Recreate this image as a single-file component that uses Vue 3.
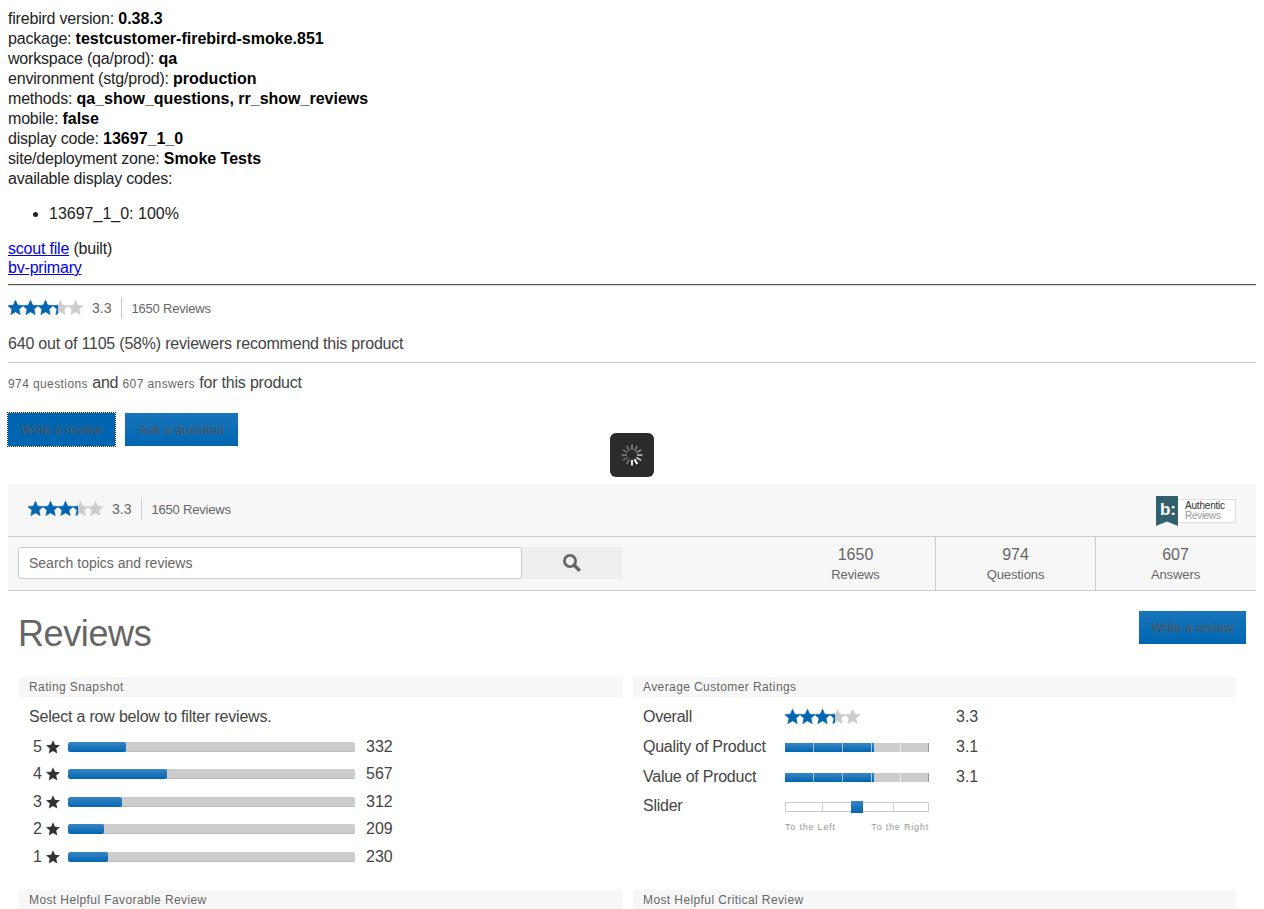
<template>
  <div class="page">
    <div class="debug">
      <div v-for="row in debugRows" :key="row[0]">{{ row[0] }}: <b>{{ row[1] }}</b></div>
      <div>available display codes:</div>
    </div>
    <ul class="codes"><li>13697_1_0: 100%</li></ul>
    <div class="links">
      <div><a href="#">scout file</a> (built)</div>
      <div><a href="#">bv-primary</a></div>
    </div>
    <hr class="rule" />

    <div class="summary first">
      <Stars />
      <span class="avg">3.3</span>
      <span class="count">1650 Reviews</span>
    </div>
    <div class="recommend">640 out of 1105 (58%) reviewers recommend this product</div>
    <div class="qa">
      <span class="small">974 questions</span> and <span class="small">607 answers</span> for this product
    </div>
    <div class="actions">
      <button class="btn focused">Write a review</button>
      <button class="btn wide">Ask a question</button>
    </div>

    <div class="spinner">
      <svg width="26" height="26" viewBox="0 0 26 26">
        <line v-for="t in ticks" :key="t.angle" x1="13" y1="2.5" x2="13" y2="8" stroke="#fff" stroke-width="2"
          :stroke-opacity="t.opacity" :transform="`rotate(${t.angle} 13 13)`" />
      </svg>
    </div>

    <section class="panel">
      <div class="panel-top">
        <div class="summary">
          <Stars />
          <span class="avg">3.3</span>
          <span class="count">1650 Reviews</span>
        </div>
        <div class="badge">
          <svg class="ribbon" width="22" height="30" viewBox="0 0 22 30"><path d="M0 0H22V30L11 25.5L0 30Z" fill="#33606f" /></svg>
          <span class="ribbon-b">b:</span>
          <div class="badge-text"><span>Authentic</span><span class="grey">Reviews</span></div>
        </div>
      </div>
      <div class="panel-bottom">
        <div class="search">
          <div class="search-input">Search topics and reviews</div>
          <div class="search-btn">
            <svg width="20" height="20" viewBox="0 0 20 20" fill="none" stroke="#666">
              <circle cx="8" cy="8" r="5.6" stroke-width="2.8" />
              <path d="M12.2 12.2L17.8 17.8" stroke-width="3.4" />
            </svg>
          </div>
        </div>
        <div class="tabs">
          <div v-for="tab in tabs" :key="tab[1]" class="tab">
            <div class="tab-num">{{ tab[0] }}</div>
            <div class="tab-label">{{ tab[1] }}</div>
          </div>
        </div>
      </div>
    </section>

    <div class="reviews-head">
      <h1>Reviews</h1>
      <button class="btn">Write a review</button>
    </div>

    <div class="cols">
      <div class="col">
        <h3 class="bar-title">Rating Snapshot</h3>
        <div class="hint">Select a row below to filter reviews.</div>
        <div class="hist">
          <div v-for="r in histogram" :key="r.star" class="hist-row">
            <span class="hist-star">{{ r.star }}</span>
            <svg class="mini-star" width="14" height="14" viewBox="0 0 24 24"><path :d="starPath" fill="#333" /></svg>
            <div class="hist-track"><div class="hist-fill" :style="{ width: (r.n / 1650 * 100) + '%' }"></div></div>
            <span class="hist-n">{{ r.n }}</span>
          </div>
        </div>
      </div>
      <div class="col">
        <h3 class="bar-title">Average Customer Ratings</h3>
        <div class="avg-list">
          <div class="avg-row">
            <span class="avg-label">Overall</span>
            <div class="avg-cell"><Stars /></div>
            <span class="avg-val">3.3</span>
          </div>
          <div v-for="a in secondary" :key="a" class="avg-row">
            <span class="avg-label">{{ a }}</span>
            <div class="avg-cell">
              <div class="seg-track">
                <div class="seg-fill"></div>
                <i v-for="n in 4" :key="n" class="seg-gap"></i>
              </div>
            </div>
            <span class="avg-val">3.1</span>
          </div>
          <div class="avg-row slider-row">
            <span class="avg-label">Slider</span>
            <div class="avg-cell">
              <div class="slider">
                <i class="slider-tick one"></i>
                <i class="slider-tick two"></i>
                <i class="slider-thumb"></i>
              </div>
              <div class="slider-labels"><span>To the Left</span><span>To the Right</span></div>
            </div>
          </div>
        </div>
      </div>
    </div>

    <div class="cols bottom">
      <div class="col"><h3 class="bar-title">Most Helpful Favorable Review</h3></div>
      <div class="col"><h3 class="bar-title">Most Helpful Critical Review</h3></div>
    </div>
  </div>
</template>

<script setup>
import { h } from 'vue'

const starPath = 'M12 .5L15.4 8.2 24 9 17.5 14.7 19.4 23.3 12 18.8 4.6 23.3 6.5 14.7 0 9 8.6 8.2Z'

// five stars, blue part clipped to the rating
const starRow = () => h('div', { class: 'stars-row' },
  [0, 1, 2, 3, 4].map(i => h('svg', { key: i, width: 15, height: 15, viewBox: '0 0 24 24' },
    [h('path', { d: starPath, fill: 'currentColor', stroke: 'currentColor', 'stroke-width': 1 })])))

const Stars = () => h('div', { class: 'stars' }, [
  starRow(),
  h('div', { class: 'stars-on' }, [starRow()])
])

const debugRows = [
  ['firebird version', '0.38.3'],
  ['package', 'testcustomer-firebird-smoke.851'],
  ['workspace (qa/prod)', 'qa'],
  ['environment (stg/prod)', 'production'],
  ['methods', 'qa_show_questions, rr_show_reviews'],
  ['mobile', 'false'],
  ['display code', '13697_1_0'],
  ['site/deployment zone', 'Smoke Tests']
]

const ticks = Array.from({ length: 12 }, (_, i) => ({
  angle: i * 30,
  opacity: [0.35, 0.35, 0.45, 0.55, 0.75, 1, 0.9, 0.3, 0.3, 0.3, 0.3, 0.3][i]
}))

const tabs = [['1650', 'Reviews'], ['974', 'Questions'], ['607', 'Answers']]

const histogram = [
  { star: 5, n: 332 },
  { star: 4, n: 567 },
  { star: 3, n: 312 },
  { star: 2, n: 209 },
  { star: 1, n: 230 }
]

const secondary = ['Quality of Product', 'Value of Product']
</script>

<style>
html, body { overflow: hidden; }
.stars { position: relative; width: 75px; height: 15px; margin-top: -2px; flex: none; color: #ccc; }
.stars-row { display: flex; width: 75px; }
.stars-row svg { display: block; flex: none; }
.stars-on { position: absolute; left: 0; top: 0; width: 50px; overflow: hidden; color: #0066b2; }
</style>

<style scoped>
.page {
  padding: 9px 8px 0;
  font-family: "Liberation Sans", Arial, sans-serif;
  font-size: 16px;
  letter-spacing: -0.2px;
  color: #222;
  position: relative;
}
.debug { line-height: 20px; }
b { letter-spacing: 0; color: #000; }
.codes { margin: 16px 0 16px; padding-left: 41px; letter-spacing: 0; }
.links { line-height: 19px; }
a { color: #00e; }
.rule {
  margin: 7px 0 0;
  border: 0;
  border-top: 1px solid #555;
  border-bottom: 1px solid #ddd;
}

.summary { display: flex; align-items: center; height: 22px; color: #666; }
.summary.first { margin-top: 11px; }
.avg { margin-left: 9px; font-size: 14px; letter-spacing: 0; padding-right: 10px; border-right: 1px solid #ccc; line-height: 22px; }
.count { margin-left: 9px; font-size: 13px; letter-spacing: -0.2px; }
.recommend { margin-top: 16px; color: #444; line-height: 18px; padding-bottom: 9px; border-bottom: 1px solid #ccc; }
.qa { margin-top: 11px; color: #444; line-height: 18px; }
.small { font-size: 12px; color: #666; letter-spacing: 0.4px; }
.actions { display: flex; gap: 10px; margin-top: 20px; }
.btn {
  width: 107px;
  height: 33px;
  padding: 0;
  border: 0;
  font-family: inherit;
  font-size: 13px;
  letter-spacing: 0;
  color: #555;
  background: linear-gradient(#1a75bb, #0066b2);
}
.btn.wide { width: 113px; }
.btn.focused { background: #0066b2; outline: 1px dotted #222; }

.spinner {
  position: absolute;
  left: 610px;
  top: 433px;
  width: 44px;
  height: 44px;
  border-radius: 6px;
  background: #2b2b2b;
  display: flex;
  align-items: center;
  justify-content: center;
}

.panel { margin-top: 38px; background: #f7f7f7; border-bottom: 1px solid #ccc; }
.panel-top {
  display: flex;
  justify-content: space-between;
  align-items: center;
  height: 50px;
  padding: 0 20px 2px;
  border-bottom: 1px solid #ccc;
}
.badge { position: relative; display: flex; align-items: center; height: 30px; margin-top: 4px; }
.ribbon { display: block; }
.ribbon-b {
  position: absolute;
  left: 4px;
  top: 4px;
  color: #fff;
  font-weight: bold;
  font-size: 17px;
  line-height: 20px;
}
.badge-text {
  width: 58px;
  height: 24px;
  box-sizing: border-box;
  border: 1px solid #ddd;
  border-left: 0;
  background: #fff;
  padding: 1px 0 0 7px;
  font-size: 10px;
  line-height: 10px;
  color: #333;
  display: flex;
  flex-direction: column;
}
.grey { color: #999; letter-spacing: -0.3px; }
.panel-bottom { display: flex; justify-content: space-between; height: 53px; }
.search { display: flex; margin: 10px 0 0 10px; height: 32px; }
.search-input {
  width: 504px;
  box-sizing: border-box;
  background: #fff;
  border: 1px solid #ccc;
  border-radius: 3px 0 0 3px;
  padding-left: 10px;
  line-height: 30px;
  font-size: 14px;
  letter-spacing: 0;
  color: #666;
}
.search-btn { width: 100px; background: #eee; display: flex; align-items: center; justify-content: center; }
.tabs { display: flex; }
.tab { width: 160px; text-align: center; color: #666; border-right: 1px solid #ccc; box-sizing: border-box; padding-top: 9px; }
.tab:last-child { border-right-color: transparent; }
.tab-num { line-height: 18px; letter-spacing: 0; }
.tab-label { font-size: 13px; line-height: 22px; letter-spacing: -0.1px; }

.reviews-head { display: flex; justify-content: space-between; align-items: flex-start; padding: 20px 10px 0; height: 66px; }
h1 { margin: 1px 0 0; font-size: 36px; font-weight: normal; letter-spacing: -0.4px; color: #666; line-height: 44px; }

.cols { display: flex; gap: 11px; padding-left: 11px; margin-right: 20px; }
.col { flex: 1; min-width: 0; }
.bar-title {
  margin: 0;
  background: #f7f7f7;
  font-size: 12px;
  font-weight: normal;
  line-height: 20px;
  color: #666;
  padding-left: 10px;
  letter-spacing: 0.4px;
}
.hint { margin: 11px 0 0 10px; line-height: 18px; color: #444; }
.hist { margin-top: 7px; }
.hist-row { display: flex; align-items: center; height: 27.5px; padding-left: 10px; color: #444; }
.hist-star { width: 13px; text-align: right; letter-spacing: 0; }
.mini-star { margin-left: 4px; flex: none; }
.hist-track { width: 287px; height: 10px; margin-left: 8px; background: #ccc; border-radius: 2px; box-shadow: inset 0 -1px 0 #bbb; overflow: hidden; }
.hist-fill { height: 100%; background: linear-gradient(#3a86c4, #0066b2); border-radius: 2px; }
.hist-n { margin-left: 11px; letter-spacing: 0; }

.avg-list { margin-top: 5px; }
.avg-row { display: flex; align-items: center; height: 30px; padding-left: 10px; color: #444; }
.avg-label { width: 142px; letter-spacing: -0.25px; }
.avg-cell { width: 144px; }
.avg-val { margin-left: 27px; letter-spacing: 0; }
.seg-track { position: relative; height: 9px; background: #ccc; box-shadow: inset -1px 0 0 #999; overflow: hidden; display: flex; justify-content: space-evenly; }
.seg-fill { position: absolute; left: 0; top: 0; bottom: 0; width: 62%; background: linear-gradient(#3a86c4, #0066b2); }
.seg-gap { position: relative; width: 1px; background: #fff; opacity: 0.6; }
.slider-row { align-items: flex-start; height: 50px; }
.slider-row .avg-label { line-height: 28px; }
.slider { position: relative; height: 10px; margin-top: 10px; box-sizing: border-box; border: 1px solid #ccc; background: #fff; }
.slider-tick { position: absolute; top: 0; bottom: 0; width: 1px; background: #ccc; }
.slider-tick.one { left: 36px; }
.slider-tick.two { left: 107px; }
.slider-thumb { position: absolute; left: 65px; top: -2px; width: 12px; height: 12px; background: linear-gradient(#3a86c4, #0066b2); }
.slider-labels { display: flex; justify-content: space-between; margin-top: 9px; font-size: 9px; letter-spacing: 0.8px; color: #999; line-height: 12px; }
.bottom { margin-top: 19px; }
</style>
